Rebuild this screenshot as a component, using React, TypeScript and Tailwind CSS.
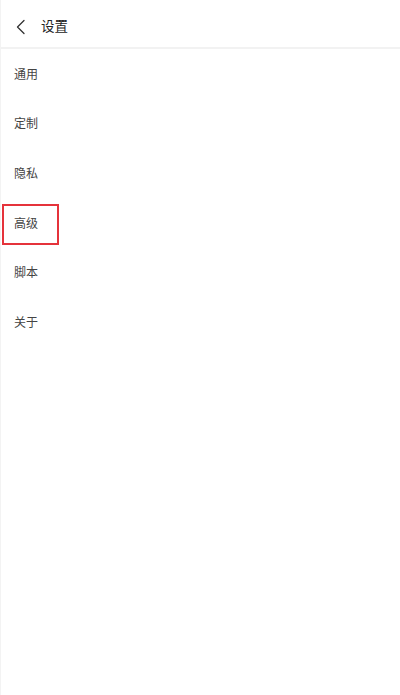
const items = ["通用", "定制", "隐私", "高级", "脚本", "关于"];

export default function App() {
    return (
        <div
            className="w-[400px] h-[695px] bg-white border-l border-[#f3f3f3] overflow-hidden"
            style={{ fontFamily: '"Noto Sans CJK SC", "Noto Sans", sans-serif' }}
        >
            {/* Header */}
            <div className="h-[49px] flex items-center pt-[7px] border-b-2 border-[#f2f2f2]">
                <svg
                    className="ml-[14px]"
                    width="11"
                    height="16"
                    viewBox="0 0 11 16"
                    fill="none"
                    stroke="#333"
                    strokeWidth="1.3"
                    strokeLinecap="round"
                    strokeLinejoin="round"
                >
                    <path d="M9 1.5 L2.5 8 L9 14.5" />
                </svg>
                <span className="ml-[15px] text-[13.5px] text-[#222] leading-none -mt-[3px]">设置</span>
            </div>

            {/* Menu list */}
            <div className="flex flex-col">
                {items.map((label) => (
                    <div key={label} className="relative h-[49.6px] flex items-center pl-[13px]">
                        <span className="text-[12px] text-[#444] leading-none">{label}</span>
                        {label === "高级" && (
                            <div className="absolute left-[1px] top-[6px] w-[57px] h-[41px] border-2 border-[#e5333b]" />
                        )}
                    </div>
                ))}
            </div>
        </div>
    );
}
